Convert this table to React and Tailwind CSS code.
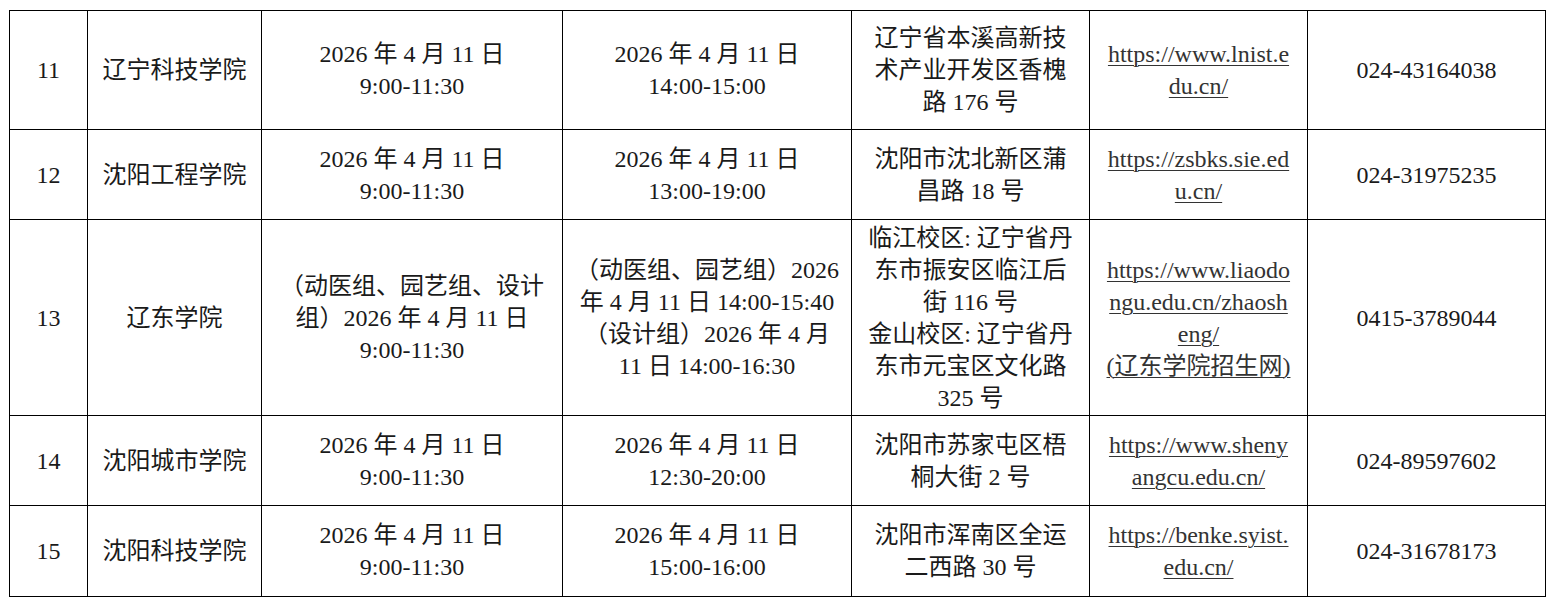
import React from "react";

const rows = [
  {
    no: "11",
    name: "辽宁科技学院",
    t1: ["2026 年 4 月 11 日", "9:00-11:30"],
    t2: ["2026 年 4 月 11 日", "14:00-15:00"],
    addr: ["辽宁省本溪高新技", "术产业开发区香槐", "路 176 号"],
    url: ["https://www.lnist.e", "du.cn/"],
    tel: "024-43164038",
    h: "h-[119px]",
  },
  {
    no: "12",
    name: "沈阳工程学院",
    t1: ["2026 年 4 月 11 日", "9:00-11:30"],
    t2: ["2026 年 4 月 11 日", "13:00-19:00"],
    addr: ["沈阳市沈北新区蒲", "昌路 18 号"],
    url: ["https://zsbks.sie.ed", "u.cn/"],
    tel: "024-31975235",
    h: "h-[90px]",
  },
  {
    no: "13",
    name: "辽东学院",
    t1: ["（动医组、园艺组、设计", "组）2026 年 4 月 11 日", "9:00-11:30"],
    t2: [
      "（动医组、园艺组）2026",
      "年 4 月 11 日 14:00-15:40",
      "（设计组）2026 年 4 月",
      "11 日 14:00-16:30",
    ],
    addr: [
      "临江校区: 辽宁省丹",
      "东市振安区临江后",
      "街 116 号",
      "金山校区: 辽宁省丹",
      "东市元宝区文化路",
      "325 号",
    ],
    url: ["https://www.liaodo", "ngu.edu.cn/zhaosh", "eng/", "(辽东学院招生网)"],
    tel: "0415-3789044",
    h: "h-[196px]",
  },
  {
    no: "14",
    name: "沈阳城市学院",
    t1: ["2026 年 4 月 11 日", "9:00-11:30"],
    t2: ["2026 年 4 月 11 日", "12:30-20:00"],
    addr: ["沈阳市苏家屯区梧", "桐大街 2 号"],
    url: ["https://www.sheny", "angcu.edu.cn/"],
    tel: "024-89597602",
    h: "h-[90px]",
  },
  {
    no: "15",
    name: "沈阳科技学院",
    t1: ["2026 年 4 月 11 日", "9:00-11:30"],
    t2: ["2026 年 4 月 11 日", "15:00-16:00"],
    addr: ["沈阳市浑南区全运", "二西路 30 号"],
    url: ["https://benke.syist.", "edu.cn/"],
    tel: "024-31678173",
    h: "h-[91px]",
  },
];

const Lines = ({ lines, link }) => (
  <div className="flex flex-col items-center">
    {lines.map((l, i) => (
      <span
        key={i}
        className={
          "whitespace-nowrap " +
          (link ? "underline underline-offset-[3px] decoration-1 text-[#333]" : "")
        }
      >
        {l}
      </span>
    ))}
  </div>
);

const cell = "border border-black text-center align-middle p-0";

export default function App() {
  return (
    <div className="min-h-[604px] bg-white pl-[9px] pt-[10px]">
      <table className="table-fixed border-collapse w-[1536px] text-[24px] leading-[32px] text-[#1a1a1a] font-['Liberation_Serif','Noto_Sans_CJK_SC',serif]">
        <colgroup>
          <col className="w-[78px]" />
          <col className="w-[174px]" />
          <col className="w-[301px]" />
          <col className="w-[289px]" />
          <col className="w-[238px]" />
          <col className="w-[218px]" />
          <col className="w-[238px]" />
        </colgroup>
        <tbody>
          {rows.map((r) => (
            <tr key={r.no} className={r.h}>
              <td className={cell}>{r.no}</td>
              <td className={cell}>{r.name}</td>
              <td className={cell}>
                <Lines lines={r.t1} />
              </td>
              <td className={cell}>
                <Lines lines={r.t2} />
              </td>
              <td className={cell}>
                <Lines lines={r.addr} />
              </td>
              <td className={cell}>
                <Lines lines={r.url} link />
              </td>
              <td className={cell}>{r.tel}</td>
            </tr>
          ))}
        </tbody>
      </table>
    </div>
  );
}
